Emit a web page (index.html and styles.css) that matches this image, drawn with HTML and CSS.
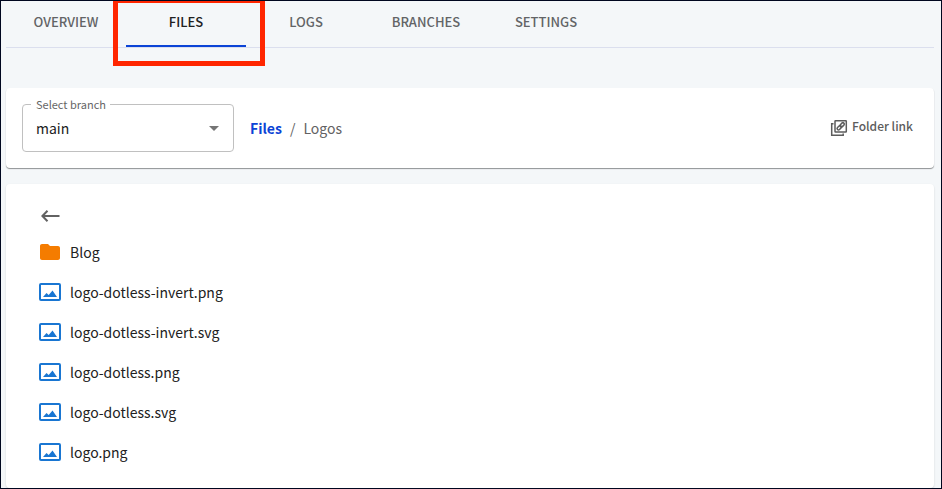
FILE: index.html
```html
<!DOCTYPE html>
<html lang="en">
<head>
  <meta charset="UTF-8">
  <meta name="viewport" content="width=device-width, initial-scale=1.0">
  <title>Files</title>
  <link rel="stylesheet" href="styles.css">
</head>
<body>

  <svg class="sprite" aria-hidden="true">
    <symbol id="icon-folder" viewBox="0 0 24 24">
      <path d="M10 4H4c-1.100 0-2 .9-2 2v12c0 1.100.9 2 2 2h16c1.100 0 2-.9 2-2V8c0-1.100-.9-2-2-2h-8z" fill="currentColor"/>
    </symbol>
    <symbol id="icon-image" viewBox="0 0 24 24">
      <rect x="2" y="4" width="20" height="16" rx="1" fill="none" stroke="currentColor" stroke-width="2"/>
      <path d="M5 17l3.500-4 2.200 2 3.800-4.500L19 17z" fill="currentColor"/>
    </symbol>
  </svg>

  <nav class="tabs">
    <button class="tab">OVERVIEW</button>
    <button class="tab active">FILES</button>
    <button class="tab">LOGS</button>
    <button class="tab">BRANCHES</button>
    <button class="tab">SETTINGS</button>
    <div class="highlight"></div>
  </nav>

  <section class="card toolbar">
    <div class="field">
      <label for="branch">Select branch</label>
      <select id="branch">
        <option>main</option>
      </select>
      <svg class="caret" viewBox="0 0 24 24"><path d="M7 10l5 5 5-5z" fill="currentColor"/></svg>
    </div>
    <div class="breadcrumb">
      <a href="#">Files</a>
      <span>/</span>
      <span>Logos</span>
    </div>
    <button class="folder-link">
      <svg viewBox="0 0 18 18" fill="none" stroke="currentColor">
        <rect x="5" y="1.700" width="11.300" height="11.300" rx="0.500" stroke-width="1.500"/>
        <path d="M3.500 4.800H1.700v11.500h11.500v-1.800" stroke-width="1.500"/>
        <g transform="rotate(-45 10.700 7.300)" stroke-width="1.500">
          <rect x="6.200" y="5.900" width="5" height="2.800" rx="1.400"/>
          <rect x="10.200" y="5.900" width="5" height="2.800" rx="1.400"/>
        </g>
      </svg>
      Folder link
    </button>
  </section>

  <section class="card files">
    <button class="back" aria-label="Back">
      <svg viewBox="0 0 24 24" fill="none" stroke="currentColor" stroke-width="2"><path d="M21.500 12H5M9.500 6.700L4.400 12l5.100 5.300"/></svg>
    </button>
    <ul>
      <li><svg class="folder"><use href="#icon-folder"/></svg><a href="#">Blog</a></li>
      <li><svg><use href="#icon-image"/></svg><a href="#">logo-dotless-invert.png</a></li>
      <li><svg><use href="#icon-image"/></svg><a href="#">logo-dotless-invert.svg</a></li>
      <li><svg><use href="#icon-image"/></svg><a href="#">logo-dotless.png</a></li>
      <li><svg><use href="#icon-image"/></svg><a href="#">logo-dotless.svg</a></li>
      <li><svg><use href="#icon-image"/></svg><a href="#">logo.png</a></li>
    </ul>
  </section>

</body>
</html>
```
FILE: styles.css
```css
* { box-sizing: border-box; margin: 0; padding: 0; }
body {
  background-color: #f4f7f9;
  color: #212121;
  font-family: "Noto Sans CJK SC", "Noto Sans", sans-serif;
  font-size: 14px;
  line-height: 20px;
  border: 1px solid #00071f;
  min-height: 100vh;
  padding: 0 7px 0 5px;
  display: flex; flex-direction: column;
}
button, select { font: inherit; color: inherit; background: none; border: none; }
button { cursor: pointer; }
a { color: inherit; text-decoration: none; }
ul { list-style: none; }
.sprite { display: none; }

.tabs {
  position: relative;
  display: flex;
  height: 47px;
  border-bottom: 1px solid #dbdfee;
}
.tab {
  width: 120px;
  padding-bottom: 4px;
  color: #626466;
  font-size: 13px; font-weight: 500;
}
.tab.active { color: #212121; border-bottom: 2px solid #0b44d6; padding-bottom: 2px; }
.highlight {
  position: absolute; top: -1px; left: 107px;
  width: 152px; height: 66px;
  border: 5px solid #ff2600;
  border-top-width: 3px;
  pointer-events: none;
}

.card {
  background-color: #fff;
  border-radius: 4px;
  box-shadow: 0 1px 2px rgba(0, 0, 0, 0.15);
}
.toolbar {
  display: flex; align-items: center;
  margin: 40px 0 16px;
  padding: 16px;
  box-shadow: 0 1px 1px #8f9294;
}
.field { position: relative; width: 212px; }
.field label {
  position: absolute; top: -8px; left: 9px;
  padding: 0 4px 0 5px;
  background-color: #fff;
  color: #666;
  font-size: 11px; line-height: 16px;
}
.field select {
  display: block;
  width: 100%; height: 48px;
  padding: 0 13px;
  border: 1px solid #c0c0c0; border-radius: 4px;
  appearance: none;
}
.caret {
  position: absolute; top: 12px; right: 8px;
  width: 24px; height: 24px;
  color: #757575;
  pointer-events: none;
}
.breadcrumb { display: flex; gap: 8px; margin-left: 16px; color: #626262; }
.breadcrumb a { color: #0b44d6; font-weight: 700; }
.folder-link {
  display: flex; align-items: center; gap: 4px;
  margin-left: auto; padding: 0 5px 4px 0;
  color: #5c5c5c;
  font-size: 12px; font-weight: 500;
}
.folder-link svg { width: 18px; height: 18px; margin-top: 4px; }

.files { flex: 1; padding: 20px 32px 16px; }
.back { display: block; color: #626262; }
.back svg { display: block; width: 24px; height: 24px; }
.files ul { padding-top: 4px; }
.files li { display: flex; align-items: center; gap: 8px; height: 40px; }
.files li svg { width: 24px; height: 24px; color: #1976d2; }
.files li .folder { color: #f57c00; }
```
